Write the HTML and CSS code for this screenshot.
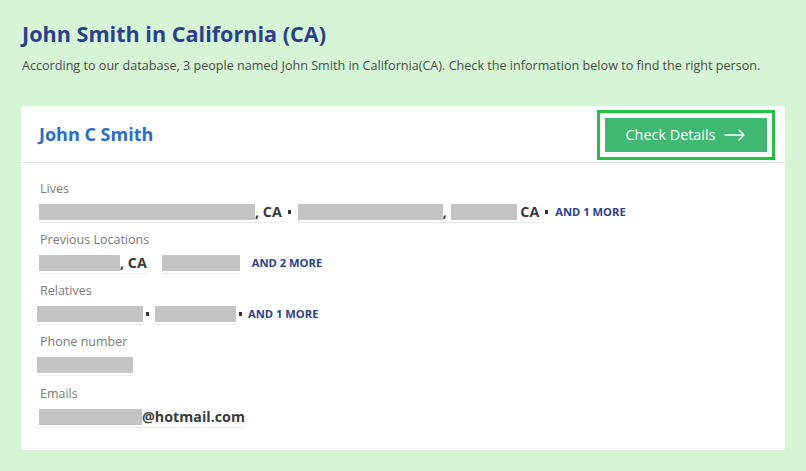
FILE: index.html
```html
<!DOCTYPE html>
<html lang="en">
<head>
<meta charset="utf-8">
<title>John Smith in California (CA)</title>
<link rel="stylesheet" href="styles.css">
</head>
<body>
<main class="page">
  <h1 class="title">John Smith in California (CA)</h1>
  <p class="intro">According to our database, 3 people named John Smith in California(CA). Check the information below to find the right person.</p>

  <section class="card">
    <header class="card-head">
      <h2 class="person">John C Smith</h2>
      <a class="btn" href="#">Check Details
        <svg class="arrow" width="22" height="12" viewBox="0 0 22 12" fill="none" stroke="#fff" stroke-width="1.4" stroke-linecap="round" stroke-linejoin="round"><path d="M1 6h19M15 1l5 5-5 5"/></svg>
      </a>
    </header>
    <div class="card-body">
      <div class="field">
        <div class="label">Lives</div>
        <div class="value">
          <span class="item"><span class="redact" style="width:216px"></span><b>, CA</b></span>
          <span class="dot"></span>
          <span class="item"><span class="redact" style="width:145px"></span><b>,&nbsp;</b><span class="redact" style="width:66px"></span><b>&nbsp;CA</b></span>
          <span class="dot"></span>
          <a class="more" href="#">AND 1 MORE</a>
        </div>
      </div>
      <div class="field">
        <div class="label">Previous Locations</div>
        <div class="value">
          <span class="item"><span class="redact" style="width:81px"></span><b>, CA</b></span>
          <span class="item gap"><span class="redact" style="width:78px"></span></span>
          <a class="more wide" href="#">AND 2 MORE</a>
        </div>
      </div>
      <div class="field">
        <div class="label">Relatives</div>
        <div class="value shift">
          <span class="item"><span class="redact" style="width:106px"></span></span>
          <span class="dot tight"></span>
          <span class="item"><span class="redact" style="width:81px"></span></span>
          <span class="dot tight"></span>
          <a class="more" href="#">AND 1 MORE</a>
        </div>
      </div>
      <div class="field">
        <div class="label">Phone number</div>
        <div class="value shift">
          <span class="item"><span class="redact" style="width:96px"></span></span>
        </div>
      </div>
      <div class="field">
        <div class="label">Emails</div>
        <div class="value">
          <span class="item"><span class="redact" style="width:103px"></span><b>@hotmail.com</b></span>
        </div>
      </div>
    </div>
  </section>
</main>
</body>
</html>
```

FILE: styles.css
```css
* { box-sizing: border-box; }

html, body {
  margin: 0;
  padding: 0;
  background: #d5f5d4;
  font-family: "Open Sans", "Noto Sans", Arial, sans-serif;
  color: #444;
}

.page {
  padding: 20px 21px 23px 21px;
}

.title {
  margin: 0 0 0 1px;
  font-size: 21.6px;
  line-height: 28px;
  font-weight: 700;
  color: #2b3f8e;
}

.intro {
  margin: 9px 0 0 1px;
  font-size: 12.6px;
  line-height: 18px;
  color: #4a4a4a;
}

.card {
  margin-top: 31px;
  background: #fff;
  border-radius: 3px;
  width: 764px;
}

.card-head {
  display: flex;
  align-items: center;
  justify-content: space-between;
  height: 57px;
  padding: 0 18px 0 18px;
  border-bottom: 1px solid #e6e6e6;
}

.person {
  margin: 0;
  font-size: 18px;
  font-weight: 700;
  color: #2a6ccc;
}

.btn {
  display: flex;
  align-items: center;
  justify-content: center;
  gap: 9px;
  width: 162px;
  height: 34px;
  background: #3fb971;
  color: #fff;
  text-decoration: none;
  font-size: 14.4px;
  border-radius: 0;
  outline: 3px solid #1ec43d;
  outline-offset: 5px;
  margin-top: 1px;
}

.arrow { display: block; }

.card-body {
  padding: 16px 18px 22px 18px;
}

.field + .field {
  margin-top: 7px;
}

.field:last-child {
  margin-top: 8px;
}

.label {
  font-size: 12.5px;
  line-height: 20px;
  color: #7a7a7a;
  padding-left: 1px;
}

.value {
  display: flex;
  align-items: flex-start;
  margin-top: 5px;
}

.value.shift {
  margin-left: -2px;
}

.item {
  display: flex;
  align-items: center;
  height: 19px;
  padding-bottom: 2px;
  border-bottom: 1px solid #ebebeb;
  font-size: 14.3px;
  color: #3a3a3a;
}

.item b {
  font-weight: 700;
  line-height: 16px;
}

.item.gap { margin-left: 15px; }

.redact {
  display: block;
  height: 16px;
  background: #c4c4c4;
}

.dot {
  width: 3px;
  height: 4px;
  background: #333;
  margin: 6px 7px 0 6px;
}

.dot.tight {
  margin: 6px 6px 0 3px;
}

.more {
  font-size: 11.2px;
  line-height: 16px;
  font-weight: 700;
  color: #2b3f8e;
  text-decoration: none;
}

.more.wide { margin-left: 12px; }
```
